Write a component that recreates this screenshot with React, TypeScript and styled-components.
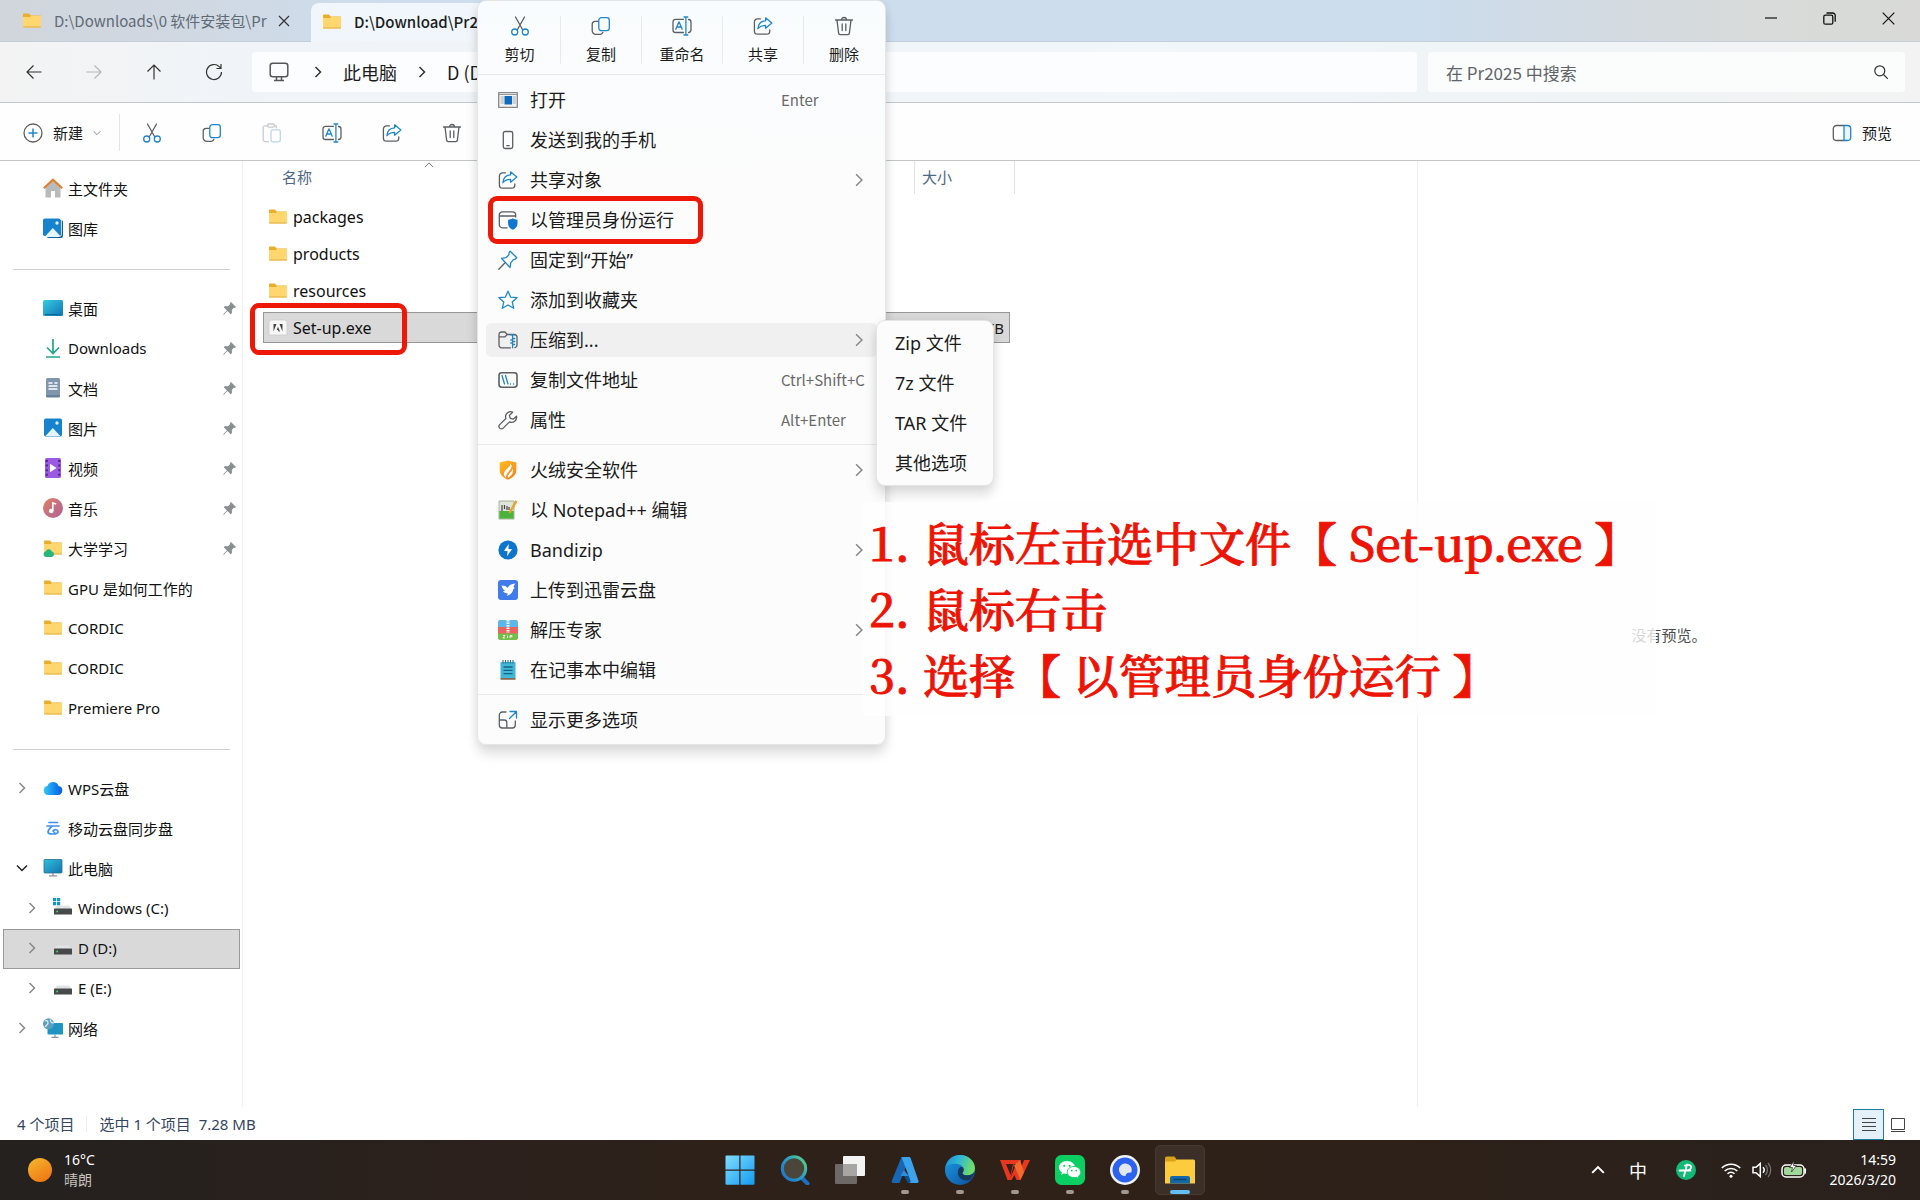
import React from "react";
import styled, { createGlobalStyle, css } from "styled-components";

const uiFont = `"Noto Sans", "Noto Sans CJK SC", sans-serif`;
const tightFont = `"Noto Sans CJK SC", sans-serif`;

const GlobalStyle = createGlobalStyle`
  *, *::before, *::after { box-sizing: border-box; }
  body { margin: 0; font-family: ${uiFont}; font-size: 15px; color: #1b1b1b; background: #fff; }
  button, input { font: inherit; color: inherit; }
  svg { display: block; flex: none; }
`;

/* ---------- shell ---------- */

const Screen = styled.div`
  position: relative;
  min-height: 100vh;
  display: flex;
  flex-direction: column;
  overflow: hidden;
`;

const PlainButton = styled.button`
  border: 0;
  padding: 0;
  background: none;
  display: flex;
  align-items: center;
  justify-content: center;
`;

const TitleBar = styled.header`
  height: 42px;
  display: flex;
  align-items: stretch;
  background: linear-gradient(90deg, #d1d6dc 0, #d0d8e2 10%, #cddded 20%, #ccdded 74%, #d3dae1 84%, #d8dbd9 92%, #d9dad8 100%);
  box-shadow: inset 0 -1px #c3ced8;
`;

const Tab = styled.div<{ $active?: boolean }>`
  display: flex;
  align-items: center;
  height: ${(p) => (p.$active ? 39 : 42)}px;
  width: ${(p) => (p.$active ? 300 : 311)}px;
  margin-top: ${(p) => (p.$active ? 3 : 0)}px;
  padding: ${(p) => (p.$active ? "0 12px 2px 11px" : "0 15px 0 22px")};
  font-family: ${tightFont};
  color: ${(p) => (p.$active ? "#1a1d21" : "#606a75")};
  font-weight: ${(p) => (p.$active ? 500 : 400)};
  background: ${(p) => (p.$active ? "#f0f6fb" : "transparent")};
  border-radius: 8px 8px 0 0;
`;

const TabLabel = styled.span`
  flex: 1;
  margin-left: 12px;
  line-height: 20px;
  white-space: nowrap;
  overflow: hidden;
`;

const TabClose = styled(PlainButton)`
  width: 24px;
  height: 24px;
`;

const WindowControls = styled.div`
  display: flex;
  margin: 0 2px 0 auto;
  height: 36px;
`;

const ControlButton = styled(PlainButton)`
  width: 59px;
  height: 36px;
`;

const NavBar = styled.div`
  height: 61px;
  padding: 10px 15px 10px 4px;
  display: flex;
  align-items: center;
  background: linear-gradient(90deg, #f3f3f3 0, #f0f4f8 12%, #f0f6fa 60%, #eff4f6 80%, #f3f3f3 100%);
  border-bottom: 1px solid #c2c8cd;
`;

const NavButton = styled(PlainButton)`
  width: 60px;
  height: 40px;
`;

const Address = styled.nav`
  flex: 1;
  height: 40px;
  margin-left: 8px;
  padding-left: 17px;
  display: flex;
  align-items: center;
  font-family: ${tightFont};
  font-size: 18px;
  line-height: 26px;
  background: #fbfdfe;
  border-radius: 4px;
`;

const Crumb = styled.a`
  color: inherit;
  text-decoration: none;
  margin: 0 15px;
`;

const CrumbArrow = styled.span<{ $first?: boolean }>`
  display: flex;
  width: 20px;
  justify-content: center;
  margin-left: ${(p) => (p.$first ? 19 : 0)}px;
`;

const SearchBox = styled.label`
  width: 477px;
  height: 40px;
  margin-left: 11px;
  padding: 0 16px 0 18px;
  display: flex;
  align-items: center;
  background: #fbfcfc;
  border-radius: 4px;
`;

const SearchInput = styled.input`
  flex: 1;
  border: 0;
  outline: 0;
  padding: 0;
  background: none;
  font-family: ${tightFont};
  font-size: 17px;
  &::placeholder { color: #616467; opacity: 1; }
`;

const Toolbar = styled.div`
  height: 58px;
  padding-top: 2px;
  display: flex;
  align-items: center;
  border-bottom: 1px solid #c2c6c8;
  background: #fefefe;
`;

const NewButton = styled(PlainButton)`
  gap: 10px;
  margin-left: 23px;
`;

const ToolDivider = styled.span`
  width: 1px;
  height: 37px;
  margin: 0 2px 0 18px;
  background: #e2e3e4;
`;

const ToolButton = styled(PlainButton)`
  width: 60px;
  height: 44px;
`;

const PreviewButton = styled(PlainButton)`
  gap: 10px;
  margin: 0 28px 0 auto;
`;

/* ---------- body ---------- */

const Body = styled.main`
  flex: 1;
  display: flex;
  align-items: stretch;
`;

const Sidebar = styled.nav`
  width: 243px;
  padding: 8px 0 0 3px;
  border-right: 1px solid #f0f0f0;
`;

const SideRule = styled.hr`
  height: 1px;
  border: 0;
  margin: 20px 12px 19px 10px;
  background: #d0d0d0;
`;

const SideItem = styled.a<{ $level?: number; $selected?: boolean }>`
  display: flex;
  align-items: center;
  height: 40px;
  width: 237px;
  padding: 0 3px 2px ${(p) => (p.$level ? 18 : 8)}px;
  color: #111;
  text-decoration: none;
  border: 1px solid ${(p) => (p.$selected ? "#999" : "transparent")};
  background: ${(p) => (p.$selected ? "#d9d9d9" : "transparent")};
`;

const Twisty = styled.span`
  width: 20px;
  display: flex;
  justify-content: center;
`;

const SideIcon = styled.span`
  width: 20px;
  margin: 0 5px 0 11px;
  display: flex;
  justify-content: center;
`;

const SideLabel = styled.span`
  flex: 1;
  white-space: nowrap;
`;

const Files = styled.section`
  flex: 1;
  padding-left: 20px;
`;

const FileTable = styled.table`
  table-layout: fixed;
  width: 752px;
  border-collapse: separate;
  border-spacing: 0;
`;

const Col = styled.col<{ $w: number }>`
  width: ${(p) => p.$w}px;
`;

const HeadCell = styled.th<{ $ruled?: boolean }>`
  position: relative;
  height: 37px;
  padding: 0 0 6px ${(p) => (p.$ruled ? 8 : 19)}px;
  text-align: left;
  font-weight: 400;
  color: #4d6785;
  ${(p) => p.$ruled && css`
    background:
      linear-gradient(#e2e2e2, #e2e2e2) 0 0 / 1px 33px no-repeat,
      linear-gradient(#e2e2e2, #e2e2e2) 100% 0 / 1px 33px no-repeat;
  `}
`;

const SortMark = styled.span`
  position: absolute;
  top: -1px;
  left: 161px;
`;

const FileCell = styled.td`
  height: 37px;
  padding: 0;
`;

const CellFill = styled.div<{ $selected?: boolean; $edge?: "start" | "end" }>`
  display: flex;
  align-items: center;
  height: 31px;
  padding: 0 5px 0 4px;
  border: 0 solid ${(p) => (p.$selected ? "#979797" : "transparent")};
  border-width: 1px ${(p) => (p.$edge === "end" ? 1 : 0)}px 1px ${(p) => (p.$edge === "start" ? 1 : 0)}px;
  background: ${(p) => (p.$selected ? "#d9d9d9" : "transparent")};
  ${(p) => p.$edge === "end" && css`
    justify-content: flex-end;
    margin-right: 5px;
  `}
`;

const FileName = styled.span`
  margin-left: 5px;
  font-size: 16px;
  color: #111;
`;

const NameWrap = styled.div`
  position: relative;
`;

const Highlight = styled.span<{ $inset: string }>`
  position: absolute;
  inset: ${(p) => p.$inset};
  border: 5px solid #ee1809;
  border-radius: 9px;
  pointer-events: none;
`;

const Preview = styled.aside`
  width: 503px;
  display: flex;
  align-items: center;
  justify-content: center;
  color: #4c4c4c;
  border-left: 1px solid #f0f0f0;
`;

const StatusBar = styled.footer`
  height: 33px;
  padding: 0 8px 0 17px;
  display: flex;
  align-items: center;
  color: #34455f;
  white-space: pre;
`;

const StatusDivider = styled.span`
  width: 1px;
  height: 16px;
  margin: 0 12px;
  background: #eceef0;
`;

const ViewButton = styled(PlainButton)<{ $on?: boolean }>`
  width: ${(p) => (p.$on ? 31 : 28)}px;
  height: 31px;
  margin-top: 2px;
  border: 1px solid ${(p) => (p.$on ? "#1f7c9c" : "transparent")};
  background: ${(p) => (p.$on ? "#e4f1fb" : "transparent")};
`;

const Spacer = styled.span`
  flex: 1;
`;

/* ---------- context menu ---------- */

const Popup = styled.div`
  position: absolute;
  background: linear-gradient(#f9fcfe, #fcfcfc 180px);
  border: 1px solid #e3e5e6;
  border-radius: 9px;
  box-shadow: 0 9px 12px rgba(0, 0, 0, 0.13), 0 0 8px rgba(0, 0, 0, 0.06);
`;

const ContextMenu = styled(Popup)`
  top: 0;
  left: 477px;
  width: 409px;
`;

const SubMenu = styled(Popup)`
  top: 320px;
  left: 876px;
  width: 118px;
  padding: 5px 0;
  display: flex;
  flex-direction: column;
  gap: 6px;
  background: #fcfcfc;
`;

const QuickRow = styled.div`
  height: 74px;
  padding: 4px 1px 0;
  display: grid;
  grid-template-columns: repeat(5, 1fr);
  align-items: center;
  border-bottom: 1px solid #e6eaec;
`;

const QuickButton = styled(PlainButton)`
  height: 48px;
  flex-direction: column;
  gap: 8px;
  line-height: 20px;
  & + & { border-left: 1px solid #e6eaec; }
`;

const MenuGroup = styled.div`
  display: flex;
  flex-direction: column;
  gap: 6px;
  padding: 8px 0 7px;
  & + & { border-top: 1px solid #e9e9e9; }
`;

const MenuItem = styled.button<{ $hot?: boolean; $plain?: boolean }>`
  position: relative;
  display: grid;
  grid-template-columns: ${(p) => (p.$plain ? "1fr" : "20px 239px 1fr 20px")};
  align-items: center;
  justify-items: start;
  column-gap: 12px;
  height: 34px;
  margin: 0 8px;
  padding: 0 8px 0 ${(p) => (p.$plain ? 10 : 12)}px;
  border: 0;
  border-radius: 5px;
  background: ${(p) => (p.$hot ? "#f0f0f0" : "transparent")};
  text-align: left;
  font-size: 18px;
  line-height: 26px;
  white-space: nowrap;
`;

const Shortcut = styled.span`
  font-family: ${tightFont};
  font-size: 15px;
  color: #6a6a6a;
`;

const ItemArrow = styled.span`
  grid-column: 4;
  justify-self: center;
`;

/* ---------- annotation ---------- */

const Notes = styled.ol`
  position: absolute;
  left: 863px;
  top: 502px;
  margin: 0;
  padding: 6px 16px 10px 6px;
  list-style: none;
  background: rgba(254, 254, 254, 0.78);
  font-family: "Noto Serif CJK SC", "Source Han Serif SC", "Liberation Serif", serif;
  font-size: 46px;
  font-weight: 500;
  -webkit-text-stroke: 1px #ee1405;
  line-height: 66px;
  color: #ee1405;
  white-space: pre;
`;

const NoteLine = styled.li`
  display: flex;
`;

const NoteNumber = styled.span`
  width: 54px;
`;

/* ---------- taskbar ---------- */

const Taskbar = styled.footer`
  height: 60px;
  display: grid;
  grid-template-columns: 1fr auto 1fr;
  align-items: center;
  color: #fff;
  background: linear-gradient(90deg, #24211f 0, #2c211c 25%, #2f2117 55%, #2a211d 100%);
`;

const Weather = styled.button`
  display: flex;
  align-items: center;
  gap: 12px;
  padding: 0 0 0 28px;
  border: 0;
  background: none;
  text-align: left;
  font-size: 14px;
  line-height: 20px;
`;

const Muted = styled.div`
  color: #c6c1bd;
`;

const Apps = styled.div`
  display: flex;
  gap: 5px;
`;

const AppButton = styled(PlainButton)<{ $running?: boolean; $active?: boolean }>`
  position: relative;
  width: 50px;
  height: 50px;
  border-radius: 5px;
  background: ${(p) => (p.$active ? "#3b2f27" : "transparent")};
  border: 1px solid ${(p) => (p.$active ? "#463a32" : "transparent")};
  ${(p) => (p.$running || p.$active) && css`
    &::after {
      content: "";
      position: absolute;
      bottom: 0;
      width: ${p.$active ? 20 : 8}px;
      height: 4px;
      border-radius: 2px;
      background: ${p.$active ? "#62bdf0" : "#a09891"};
    }
  `}
`;

const Tray = styled.div`
  display: flex;
  align-items: center;
  justify-content: flex-end;
  padding-right: 24px;
`;

const TrayButton = styled(PlainButton)<{ $w: number }>`
  width: ${(p) => p.$w}px;
  height: 40px;
  font-size: 18px;
`;

const Clock = styled.time`
  width: 84px;
  text-align: right;
  font-size: 14px;
  line-height: 20px;
`;

/* ---------- line icons ---------- */

const G = "#5c5f62";
const B = "#1f86cc";

type IconProps = { size?: number; children: React.ReactNode; box?: string };
const Line = ({ size = 20, box = "0 0 20 20", children }: IconProps) => (
  <svg width={size} height={size} viewBox={box} fill="none" stroke={G} strokeWidth="1.3" strokeLinecap="round" strokeLinejoin="round">
    {children}
  </svg>
);

const CutIcon = () => (
  <Line><path d="M5.5 1 12.8 14M14.5 1 7.2 14" /><g stroke={B}><circle cx="4.7" cy="16" r="3" /><circle cx="15.3" cy="16" r="3" /></g></Line>
);
const CopyIcon = () => (
  <Line><path d="M7 5.3H4.2a3 3 0 0 0-3 3v6.500a3.500 3.500 0 0 0 3.500 3.500h4.500a3 3 0 0 0 2.700-2" /><rect x="7.800" y="1.700" width="10.500" height="13" rx="2.600" stroke={B} /></Line>
);
const PasteIcon = () => (
  <Line><g stroke="#c9ccd0"><path d="M6 2.800H3a1.800 1.800 0 0 0-1.800 1.800v12.200A1.800 1.800 0 0 0 3 18.600h3.500M12.500 2.800h1.800v2" /><rect x="5.500" y="1" width="7" height="3.200" rx="1.400" /></g><rect x="9" y="6.800" width="9.300" height="12" rx="1.800" stroke="#bdd5e6" /></Line>
);
const RenameIcon = () => (
  <Line><path d="M11.500 3.300H3.600A2.600 2.600 0 0 0 1 5.900v8a2.600 2.600 0 0 0 2.600 2.600h7.900M16.500 3.500A2.600 2.600 0 0 1 19 6v8a2.600 2.600 0 0 1-2.500 2.500" /><g stroke={B}><path d="M13.900 1v18M12 1h3.800M12 19h3.800M3.800 13.200 7 5.800l3.200 7.400M5 11h4" /></g></Line>
);
const ShareIcon = () => (
  <Line><path d="M7.500 2.800H4.600A3.200 3.200 0 0 0 1.400 6v9a3.200 3.200 0 0 0 3.200 3.200h9a3.200 3.200 0 0 0 3.200-3.200v-1" /><path stroke={B} d="M12.600 1.800 18.800 7l-6.200 5.200V9.300c-4 0-6 1.200-7.700 3.400.3-4.400 3-7.600 7.700-7.900z" /></Line>
);
const TrashIcon = () => (
  <Line><path d="M1.500 4h17M3 4l1.600 13.200a1.600 1.600 0 0 0 1.600 1.400h7.600a1.600 1.600 0 0 0 1.600-1.400L17 4M7.500 4a2.500 2.500 0 0 1 5 0M8.200 8v6.500M11.800 8v6.500" /></Line>
);
const OpenIcon = () => (
  <Line><rect x=".7" y="2.700" width="18.600" height="14.600" fill="#f4f4f4" stroke="#888" /><path d="M1 4.500h18" stroke="#999" strokeWidth="1" /><path d="M3 7h2.500M3 9h2.500M3 11h2.500M3 13h2.500M15 7h2.500M15 9h2.500M15 11h2.500M15 13h2.500" stroke="#999" strokeWidth=".8" /><rect x="6.500" y="6" width="7.500" height="8.500" fill="#0f6cbd" stroke="none" /></Line>
);
const PhoneIcon = () => <Line><rect x="5.300" y="1.500" width="9.400" height="17" rx="1.800" /><path d="M8.800 15.700h2.400" /></Line>;
const AdminIcon = () => (
  <Line><path d="M9 17.800H4.500A3.200 3.200 0 0 1 1.300 14.600V5a3.200 3.200 0 0 1 3.200-3.200h10A3.200 3.200 0 0 1 17.700 5v2M1.500 6h16" /><path d="M14.800 8.300c1.500 1 3 1.400 4.700 1.500v3.700c0 3-1.800 5-4.700 6.200-2.900-1.200-4.700-3.200-4.700-6.200V9.800c1.700-.1 3.200-.5 4.700-1.500z" fill="#0f78d0" stroke="none" /></Line>
);
const PinLineIcon = () => <Line><path d="M.8 19.200 6.800 13" /><path stroke={B} d="M12.200 1.200 18.800 7.800l-1.600 1.300-2 .7-2.500 3-.6 4.700L3.400 8.300l4.500-.6 2.900-2.700.4-2.600z" /></Line>;
const StarIcon = () => <Line><path stroke={B} d="m10 1.200 2.600 5.900 6.500.6-4.900 4.200 1.500 6.400L10 15l-5.700 3.300 1.500-6.400L.9 7.700l6.500-.6z" /></Line>;
const ZipIcon = () => (
  <Line><path d="M12.500 17.800H3.600A2.600 2.600 0 0 1 1 15.200V4.400a2.400 2.400 0 0 1 2.400-2.400h3.500l2.300 2.500h7.200A2.600 2.600 0 0 1 19 7.100v8.100a2.600 2.600 0 0 1-2 2.500M1 6.800h6l2.200-2.200" /><path stroke={B} d="M12.800 4.800h3.600M14.600 4.800v13M14.600 8.500h2M14.600 11.500h2M12.800 10h1.600M12.800 13h1.600M14.600 14.500h2" /></Line>
);
const PathIcon = () => <Line><rect x="1" y="2.800" width="18" height="14.400" rx="2.600" strokeWidth="1.600" /><path stroke={B} d="m4 5.500 2.500 8.500M7.500 5.500 10 14M12.500 14h.1M15.500 14h.1" /></Line>;
const WrenchIcon = () => <Line><path d="M12.600 1.700a5 5 0 0 0-4.700 6.800L1.700 14.600a2.200 2.200 0 0 0 3.500 3.500l6.300-6.200a5.100 5.100 0 0 0 7-5.700l-3.300 3-2.900-.8-.9-3 3.200-3.200a5 5 0 0 0-2-.5z" /></Line>;
const MoreIcon = () => (
  <Line><path d="M8 2H4.300A3 3 0 0 0 1.300 5v10a3 3 0 0 0 3 3h10a3 3 0 0 0 3-3v-4M1.300 10h5a2.500 2.500 0 0 1 2.500 2.500V18" /><path stroke={B} d="M12 1.500h6.500V8M18.300 1.700 11.500 8.500" /></Line>
);
const Chevron = ({ dir = "right", size = 12, color = "#777", w = 1.5 }: { dir?: "right" | "down" | "up"; size?: number; color?: string; w?: number }) => (
  <svg width={size} height={size} viewBox="0 0 12 12" fill="none" stroke={color} strokeWidth={w}>
    <path d={dir === "right" ? "M3.500 1 8.500 6l-5 5" : dir === "down" ? "M1 3.500l5 5 5-5" : "M1 8.500l5-5 5 5"} />
  </svg>
);

/* ---------- colour icons ---------- */

const Folder = ({ cloud }: { cloud?: boolean }) => (
  <svg width="20" height="18" viewBox="0 0 20 18">
    <path d="M1 2.500C1 1.900 1.400 1.500 2 1.500h5l1.600 2H18c.6 0 1 .4 1 1V8H1z" fill="#e8ae2c" />
    <path d="M1 5h7l1.500-1.300H18c.6 0 1 .4 1 1v9.800c0 .5-.4 1-1 1H2c-.6 0-1-.4-1-1z" fill="#ffd76e" />
    <path d="M1 14.400c0 .6.400 1.100 1 1.100h16c.6 0 1-.5 1-1.100z" fill="#e2ae44" />
    {cloud && <path d="M3 18a2.800 2.800 0 0 1-.3-5.500 3.300 3.300 0 0 1 6.200 0A2.800 2.800 0 0 1 8.500 18z" fill="#27b77c" />}
  </svg>
);
const HomeIcon = () => (
  <svg width="20" height="20" viewBox="0 0 20 20">
    <path d="M2.500 9 10 2.500 17.500 9v10.500H12V13H8v6.500H2.500z" fill="#b9babd" />
    <path d="M.8 10.300 10 1.800l9.200 8.500" fill="none" stroke="#e07f2d" strokeWidth="2.200" />
  </svg>
);
const Picture = ({ stacked }: { stacked?: boolean }) => (
  <svg width="20" height="20" viewBox="0 0 20 20">
    {stacked && <rect x="3.500" y="2" width="16.500" height="18" rx="2" fill="#0d5f9e" />}
    {stacked && <path d="M18.300 1.500v15a2 2 0 0 1-2 2H2" stroke="#e9f5fc" fill="none" />}
    <rect x={stacked ? 0 : 1} y="0.500" width={stacked ? 17.500 : 18} height={stacked ? 17.500 : 18} rx="1.800" fill="#1683cc" />
    <path d="m2.500 18 7.300-8 7.500 8z" fill="#e6f5fd" />
    <circle cx="14" cy="5" r="1.700" fill="#d8f0fc" />
  </svg>
);
const DesktopIcon = () => (
  <svg width="20" height="16" viewBox="0 0 20 16">
    <defs><linearGradient id="desk" x2="1" y2="1"><stop stopColor="#38cbe0" /><stop offset="1" stopColor="#0c75b8" /></linearGradient></defs>
    <rect width="20" height="16" rx="1.500" fill="url(#desk)" /><path d="M2 14.600h16" stroke="#0f5f94" strokeDasharray="13 1 1 1" />
  </svg>
);
const DownloadIcon = () => (
  <svg width="18" height="20" viewBox="0 0 18 20" fill="none" stroke="#22a68b" strokeWidth="1.700"><path d="M9 1v14M3 9.500l6 6 6-6M2 19h14" /></svg>
);
const DocIcon = () => (
  <svg width="16" height="20" viewBox="0 0 16 20"><rect x="1" width="14" height="19" rx="1.500" fill="#8195ad" /><path d="M3.500 5h4M3.500 8h9M3.500 11h9M9.500 5h3" stroke="#fff" strokeWidth="1.400" /><path d="M1 17h14v1a1.500 1.500 0 0 1-1.500 1.500h-11A1.500 1.500 0 0 1 1 18z" fill="#6a7f99" /></svg>
);
const VideoIcon = () => (
  <svg width="18" height="20" viewBox="0 0 18 20"><rect x="1" width="16" height="20" rx="1.600" fill="#9a5be0" /><path d="M2.800 2v16M15.200 2v16" stroke="#4a2192" strokeWidth="2" strokeDasharray="2 2.600" /><path d="m6 5.800 6.500 4.200L6 14.200z" fill="#fff" /></svg>
);
const MusicIcon = () => (
  <svg width="20" height="20" viewBox="0 0 20 20"><defs><linearGradient id="mus" y2="1"><stop stopColor="#e08060" /><stop offset="1" stopColor="#b0609a" /></linearGradient></defs><circle cx="10" cy="10" r="10" fill="url(#mus)" /><circle cx="8.200" cy="13" r="2.300" fill="#fff" /><path d="M9.800 13V5l3.400 1" stroke="#fff" strokeWidth="1.600" fill="none" /></svg>
);
const CloudIcon = () => (
  <svg width="20" height="16" viewBox="0 0 20 16"><defs><linearGradient id="cl"><stop stopColor="#37c9f4" /><stop offset=".6" stopColor="#1384ee" /><stop offset="1" stopColor="#0a5ce0" /></linearGradient></defs><path d="M5 15a4.600 4.600 0 0 1-.6-9.100 6 6 0 0 1 11.200 0A4.600 4.600 0 0 1 15 15z" fill="url(#cl)" /></svg>
);
const YunIcon = () => (
  <svg width="14" height="14" viewBox="0 0 14 14" fill="none" stroke="#3d8ff0" strokeWidth="1.700" strokeLinecap="round"><path d="M3 1.500h8.500M1 5h12M5.500 5.500C3.500 8 2 9 2 11s2 2 4.500 2 5.500 0 5.500-2.300-3.500-2.700-5-.7L8.500 11.500" /></svg>
);
const PcIcon = () => (
  <svg width="20" height="18" viewBox="0 0 20 18"><defs><linearGradient id="pc" x2="1" y2="1"><stop stopColor="#30bfdd" /><stop offset="1" stopColor="#1473ad" /></linearGradient></defs><rect x="1" y=".5" width="18" height="13.500" rx=".8" fill="url(#pc)" stroke="#256f93" strokeWidth=".8" /><path d="M10 14v2.500M6 16.800h8" stroke="#8b9297" strokeWidth="1.300" /></svg>
);
const DriveIcon = ({ win }: { win?: boolean }) => (
  <svg width="20" height="20" viewBox="0 0 20 20"><path d="M4 7.500h12l3 4H1z" fill="#e2e3e4" /><rect x="1" y="10.500" width="18" height="6" rx=".6" fill="#47494b" /><circle cx="4.200" cy="13.500" r=".9" fill="#49e05b" />{win && <path d="M0 0h3.200v3.200H0zM4 0h3.200v3.200H4zM0 4h3.200v3.200H0zM4 4h3.200v3.200H4z" fill="#1494c8" />}</svg>
);
const NetIcon = () => (
  <svg width="20" height="20" viewBox="0 0 20 20"><rect x="4.500" y="5" width="15.500" height="11.500" rx=".8" fill="#1f93c2" /><path d="M12 16.500V19M8.500 19.300h7" stroke="#8b9297" strokeWidth="1.200" /><circle cx="5.500" cy="5.800" r="5.500" fill="#5c9fbd" /><path d="M2 3c2-1 3 0 3 2S3 7 2.500 9M7.500 1.500C7 4 9 5 10.500 5" stroke="#d8ecf4" strokeWidth="1.300" fill="none" /></svg>
);
const PushPin = () => (
  <svg width="13" height="13" viewBox="0 0 13 13" fill="#8a8e91"><path d="M8 0l5 5-1.200 1-1-.2-2 2.200.2 3-1.300 1.200L4.600 9 .8 12.800l-.6-.6L4 8.400.8 5.300 2 4l3 .2L7.200 2 7 1z" /></svg>
);
const AdobeFile = () => (
  <svg width="20" height="18" viewBox="0 0 20 18"><path d="M1 3 3 1h14l2 2v13H1z" fill="#f7f7f7" stroke="#cdcdcd" strokeWidth=".8" /><path d="M5.500 5h3L5.500 12.500zM11.500 5h3v7.500zM10 7.800l2 4.700h-1.400l-.6-1.500H8.700z" fill="#444" /></svg>
);
const HuorongIcon = () => <svg width="20" height="20" viewBox="0 0 20 20"><defs><linearGradient id="hr" x2=".7" y2="1"><stop stopColor="#ffbf1f" /><stop offset="1" stopColor="#f58420" /></linearGradient></defs><path d="M10 .5 18.300 2.500V10c0 4.500-3.300 7.700-8.300 9.700C5 17.700 1.700 14.500 1.700 10V2.500z" fill="url(#hr)" /><path d="M12.500 3.500c.2 3.500-5.500 5.500-6.500 9.500-.4 1.800.3 3.500 2 4.800C7.500 13 12.500 11 13.500 7c.2-1.300-.2-2.500-1-3.500z" fill="#fff" /><path d="M14.800 8.500c.8 4-.8 7-4.800 9.300-1-3.800 3.800-5 4.800-9.300z" fill="#fff" /></svg>;
const NppIcon = () => <svg width="20" height="20" viewBox="0 0 20 20"><path d="M1 1h15v18H1z" fill="#dfe5d8" stroke="#98a08f" strokeWidth=".8" /><path d="M1.400 11h14.200v7.600H1.400z" fill="#4cb23c" /><path d="M4 5v6M6.500 5v4M9 6v4M11 7v3" stroke="#444" strokeWidth="1.200" /><path d="m18.500.8-7 12" stroke="#e4a52c" strokeWidth="2.400" /></svg>;
const BandizipIcon = () => <svg width="20" height="20" viewBox="0 0 20 20"><circle cx="10" cy="10" r="9.600" fill="#0d76cc" /><path d="M10.800 4 6 10.800l3.600.4-.6 5L14 9.300l-3.600-.4z" fill="#fff" /></svg>;
const XunleiIcon = () => <svg width="20" height="20" viewBox="0 0 20 20"><rect width="20" height="20" rx="3" fill="#3f7bea" /><path d="M3.500 5.500c3 0 5 .8 6.300 2.500.8-2.500 3-4.200 7.700-4.500-1.200 1.200-1.800 2.300-1.800 4l1.300.6-1.600.9c-.8 3.800-3 5.800-6.700 7l1.200-2.500C7.500 13.300 5.800 12.500 5 11l2.200-.3C5 9.500 4 7.800 3.500 5.500z" fill="#fff" /></svg>;
const JieyaIcon = () => <svg width="20" height="20" viewBox="0 0 20 20"><rect width="20" height="20" rx="3" fill="#e9635f" /><path d="M0 7V3a3 3 0 0 1 3-3h14a3 3 0 0 1 3 3v4z" fill="#5ab9e8" /><path d="M0 13.500h20V17a3 3 0 0 1-3 3H3a3 3 0 0 1-3-3z" fill="#72c04a" /><path d="M10 0v13" stroke="#fff" strokeWidth="3" strokeDasharray="1.500 1" /><path d="M5 15.500h2l-2 2.500h2M9.500 15.500V18M12 15.500V18M12 15.500h2v1.300h-2" stroke="#fff" strokeWidth=".8" fill="none" /></svg>;
const NotepadIcon = () => <svg width="20" height="20" viewBox="-1 0 20 20"><rect x="1.500" y="2" width="15" height="17" rx="1.200" fill="#40b6d8" /><path d="M1.500 18h15v1.800h-15z" fill="#8a6b52" /><path d="M4 0v3.500M6.500 0v3.500M9 0v3.500M11.500 0v3.500M14 0v3.500" stroke="#2e6e86" strokeWidth="1.100" /><path d="M4.500 7h9M4.500 10.300h9M4.500 13.600h9" stroke="#14637f" strokeWidth="1.300" /></svg>;

const apps: { name: string; running?: boolean; active?: boolean; icon: React.ReactNode }[] = [
  { name: "开始", icon: <svg width="30" height="30" viewBox="0 0 30 30"><defs><linearGradient id="win" x2="1" y2="1"><stop stopColor="#7fdcff" /><stop offset="1" stopColor="#149cf0" /></linearGradient></defs><path d="M1.500.5h12.800v14H.5v-13a1 1 0 0 1 1-1zM15.500.5h13a1 1 0 0 1 1 1v13h-14zM.5 15.700h13.800v14H1.500a1 1 0 0 1-1-1zM15.500 15.700h14v13a1 1 0 0 1-1 1h-13z" fill="url(#win)" /></svg> },
  { name: "搜索", icon: <svg width="30" height="30" viewBox="0 0 30 30" fill="none"><defs><linearGradient id="se" x1="1" x2="0" y2=".8"><stop stopColor="#5ed67f" /><stop offset=".5" stopColor="#2b9fc4" /><stop offset="1" stopColor="#1e78d0" /></linearGradient></defs><path d="m21.500 22.500 6 6" stroke="#1d6fc0" strokeWidth="4" strokeLinecap="round" /><circle cx="14" cy="13.500" r="11.700" fill="#4b463c" stroke="url(#se)" strokeWidth="3" /></svg> },
  { name: "任务视图", icon: <svg width="32" height="30" viewBox="0 0 32 30"><rect x="9" y="1" width="22" height="20" rx="1" fill="#f3f3f3" /><rect x="1" y="9" width="22" height="20" rx="1" fill="#6d6966" /><path d="M9 9h14v12H9z" fill="#a8a6a4" /></svg> },
  { name: "Azure", running: true, icon: <svg width="28" height="28" viewBox="0 0 28 28"><path d="M10.500 1h8.300L8.500 27H2A1.500 1.500 0 0 1 .7 25z" fill="#1767b4" /><path d="M12 18h8v9h-3z" fill="#0c4f92" /><path d="M10.500 1H18c.8 0 1.300.4 1.600 1L27.500 25a1.500 1.500 0 0 1-1.400 2h-8c1.400-.3 1.800-1.200 1.400-2.200z" fill="#3ca2ec" /><path d="M13 14 9.500 20h8z" fill="#2d8fdc" /></svg> },
  { name: "Edge", running: true, icon: <svg width="30" height="30" viewBox="0 0 30 30"><defs><linearGradient id="ed" x2="1" y2=".3"><stop stopColor="#1c88d8" /><stop offset=".5" stopColor="#30b8d4" /><stop offset="1" stopColor="#6edc6a" /></linearGradient><linearGradient id="ed2" x2="1" y2="1"><stop stopColor="#1c9be4" /><stop offset="1" stopColor="#0c4f9e" /></linearGradient></defs><circle cx="15" cy="15" r="15" fill="url(#ed2)" /><path d="M.3 13C1.500 5 7.500 0 15 0c8.500 0 15 6 15 13.300 0 4.500-3.500 7-7.200 7-3.300 0-6-1-5.300-2.600 1.800-2 1.500-6-2-7.700C9.500 7.500 3 9 .3 13z" fill="url(#ed)" /><path d="M18.500 13.500c.5 1.500.2 3-.8 4.200-.8 1.500 1.800 2.700 5.100 2.600 3-.1 5-1.300 6.300-3-.6 3-2 5.500-4 7.500-4 1.500-8.500.3-10.700-2.600-2.300-3-1.800-8 .6-9.700 1.400-.8 3-.3 3.500 1z" fill="#17395c" /></svg> },
  { name: "WPS", running: true, icon: <svg width="30" height="22" viewBox="0 0 30 22"><path d="M0 1h21l-1.500 4H14l-3.800 14.500L15 8l3.500 8L24 1h6l-9.500 20h-4L14.500 16l-3 5h-4z" fill="#e8371f" /><path d="m6 5 4.500 11L13 5z" fill="#32201a" /><path d="M14 6.500 20.500 21 24 13l-4-12z" fill="#f26a2e" /></svg> },
  { name: "微信", running: true, icon: <svg width="30" height="30" viewBox="0 0 30 30"><rect width="30" height="30" rx="6.500" fill="#0bcf63" /><path d="M12 6c-4.500 0-8 2.900-8 6.500 0 2 1.100 3.800 2.900 5l-.7 2.300 2.700-1.400c1 .3 2 .4 3.100.4 4.500 0 8-2.800 8-6.300C20 8.900 16.500 6 12 6z" fill="#fff" /><path d="M19 11.500c-3.800 0-6.800 2.500-6.800 5.600s3 5.500 6.800 5.500c.9 0 1.700-.1 2.500-.3l2.300 1.200-.6-2c1.600-1 2.600-2.600 2.600-4.400 0-3.100-3-5.600-6.800-5.600z" fill="#fff" stroke="#0bcf63" strokeWidth=".9" /><g fill="#0bcf63"><circle cx="9.300" cy="10.800" r="1.100" /><circle cx="14.700" cy="10.800" r="1.100" /><circle cx="16.800" cy="15.600" r=".9" /><circle cx="21.200" cy="15.600" r=".9" /></g></svg> },
  { name: "夸克", running: true, icon: <svg width="30" height="30" viewBox="0 0 30 30"><circle cx="15" cy="15" r="15" fill="#f1f3f8" /><circle cx="15" cy="15" r="12.500" fill="#2b63ee" /><path d="M15 8.500a6.300 6.300 0 1 0 .5 12.600c.3-1.800 1-2.900 2.700-3.300 1.400-.3 2.500-.3 3-.3A6.400 6.400 0 0 0 15 8.500z" fill="#e4e7ee" /></svg> },
  { name: "文件资源管理器", active: true, icon: <svg width="30" height="28" viewBox="0 0 30 28"><path d="M0 2a1.500 1.500 0 0 1 1.500-1.500h8L12 4v3H0z" fill="#dba11a" /><path d="M0 5.500h10L12 3.500h16.500A1.500 1.500 0 0 1 30 5v22.500H0z" fill="#fccb3e" /><path d="M5 27.500V22a2 2 0 0 1 2-2h16a2 2 0 0 1 2 2v5.500z" fill="#1569a8" /><path d="M8.500 23.500h13" stroke="#0b4470" strokeWidth="1.600" /></svg> },
];

type Side = { label: string; icon: React.ReactNode; pin?: boolean; arrow?: "right" | "down"; level?: number; selected?: boolean };
const sections: Side[][] = [
  [{ label: "主文件夹", icon: <HomeIcon /> }, { label: "图库", icon: <Picture stacked /> }],
  [
    { label: "桌面", icon: <DesktopIcon />, pin: true },
    { label: "Downloads", icon: <DownloadIcon />, pin: true },
    { label: "文档", icon: <DocIcon />, pin: true },
    { label: "图片", icon: <Picture />, pin: true },
    { label: "视频", icon: <VideoIcon />, pin: true },
    { label: "音乐", icon: <MusicIcon />, pin: true },
    { label: "大学学习", icon: <Folder cloud />, pin: true },
    { label: "GPU 是如何工作的", icon: <Folder /> },
    { label: "CORDIC", icon: <Folder /> },
    { label: "CORDIC", icon: <Folder /> },
    { label: "Premiere Pro", icon: <Folder /> },
  ],
  [
    { label: "WPS云盘", icon: <CloudIcon />, arrow: "right" },
    { label: "移动云盘同步盘", icon: <YunIcon /> },
    { label: "此电脑", icon: <PcIcon />, arrow: "down" },
    { label: "Windows (C:)", icon: <DriveIcon win />, arrow: "right", level: 1 },
    { label: "D (D:)", icon: <DriveIcon />, arrow: "right", level: 1, selected: true },
    { label: "E (E:)", icon: <DriveIcon />, arrow: "right", level: 1 },
    { label: "网络", icon: <NetIcon />, arrow: "right" },
  ],
];

const files = [
  { name: "packages" },
  { name: "products" },
  { name: "resources" },
  { name: "Set-up.exe", size: "KB", selected: true },
];

type Item = { label: string; icon: React.ReactNode; keys?: string; more?: boolean; hot?: boolean; marked?: boolean };
const menu: Item[][] = [
  [
    { label: "打开", icon: <OpenIcon />, keys: "Enter" },
    { label: "发送到我的手机", icon: <PhoneIcon /> },
    { label: "共享对象", icon: <ShareIcon />, more: true },
    { label: "以管理员身份运行", icon: <AdminIcon />, marked: true },
    { label: "固定到“开始”", icon: <PinLineIcon /> },
    { label: "添加到收藏夹", icon: <StarIcon /> },
    { label: "压缩到...", icon: <ZipIcon />, more: true, hot: true },
    { label: "复制文件地址", icon: <PathIcon />, keys: "Ctrl+Shift+C" },
    { label: "属性", icon: <WrenchIcon />, keys: "Alt+Enter" },
  ],
  [
    { label: "火绒安全软件", icon: <HuorongIcon />, more: true },
    { label: "以 Notepad++ 编辑", icon: <NppIcon /> },
    { label: "Bandizip", icon: <BandizipIcon />, more: true },
    { label: "上传到迅雷云盘", icon: <XunleiIcon /> },
    { label: "解压专家", icon: <JieyaIcon />, more: true },
    { label: "在记事本中编辑", icon: <NotepadIcon /> },
  ],
  [{ label: "显示更多选项", icon: <MoreIcon /> }],
];

const quick = [
  { label: "剪切", icon: <CutIcon /> },
  { label: "复制", icon: <CopyIcon /> },
  { label: "重命名", icon: <RenameIcon /> },
  { label: "共享", icon: <ShareIcon /> },
  { label: "删除", icon: <TrashIcon /> },
];

const tools = [
  { label: "剪切", icon: <CutIcon /> },
  { label: "复制", icon: <CopyIcon /> },
  { label: "粘贴", icon: <PasteIcon /> },
  { label: "重命名", icon: <RenameIcon /> },
  { label: "共享", icon: <ShareIcon /> },
  { label: "删除", icon: <TrashIcon /> },
];

const navIcons = [
  { label: "后退", d: "M16.500 9H2M8.500 2.500 2 9l6.500 6.500", color: "#333" },
  { label: "前进", d: "M1.500 9H16M9.500 2.500 16 9l-6.500 6.500", color: "#b4b7ba" },
  { label: "向上", d: "M9 16.500V2M2.500 8.500 9 2l6.500 6.500", color: "#333" },
  { label: "刷新", d: "M16.500 9a7.500 7.500 0 1 1-2.300-5.400L16 5.300M16 1v4.500h-4.500", color: "#333" },
];

export default function App() {
  return (
    <Screen>
      <GlobalStyle />
      <TitleBar>
        <Tab>
          <Folder />
          <TabLabel>D:\Downloads\0 软件安装包\Pr</TabLabel>
          <TabClose aria-label="关闭标签页">
            <svg width="12" height="12" viewBox="0 0 12 12" stroke="#333" strokeWidth="1.200"><path d="m1 1 10 10M11 1 1 11" /></svg>
          </TabClose>
        </Tab>
        <Tab $active>
          <Folder />
          <TabLabel>D:\Download\Pr2025</TabLabel>
        </Tab>
        <WindowControls>
          <ControlButton aria-label="最小化"><svg width="12" height="12" viewBox="0 0 12 12" stroke="#111" strokeWidth="1.200"><path d="M0 6h12" /></svg></ControlButton>
          <ControlButton aria-label="还原"><svg width="13" height="13" viewBox="0 0 13 13" fill="none" stroke="#111" strokeWidth="1.300"><rect x=".8" y="3.200" width="9" height="9" rx="1.500" /><path d="M3.500 1h6.200A2.500 2.500 0 0 1 12.200 3.500v6.200" /></svg></ControlButton>
          <ControlButton aria-label="关闭"><svg width="13" height="13" viewBox="0 0 13 13" stroke="#111" strokeWidth="1.200"><path d="m.7.7 11.600 11.600M12.300.7.7 12.300" /></svg></ControlButton>
        </WindowControls>
      </TitleBar>

      <NavBar>
        {navIcons.map((n) => (
          <NavButton key={n.label} aria-label={n.label}>
            <svg width="18" height="18" viewBox="0 0 18 18" fill="none" stroke={n.color} strokeWidth="1.200"><path d={n.d} /></svg>
          </NavButton>
        ))}
        <Address aria-label="地址">
          <svg width="20" height="20" viewBox="0 0 20 20" fill="none" stroke="#55585b" strokeWidth="1.500"><rect x="1.200" y="1.200" width="17.600" height="13.600" rx="2.500" /><path d="M7.500 15v3M12.500 15v3M5 18.500h10" /></svg>
          <CrumbArrow $first><Chevron color="#333" /></CrumbArrow>
          <Crumb href="#pc">此电脑</Crumb>
          <CrumbArrow><Chevron color="#333" /></CrumbArrow>
          <Crumb href="#d">D (D:)</Crumb>
        </Address>
        <SearchBox>
          <SearchInput placeholder="在 Pr2025 中搜索" aria-label="搜索" />
          <svg width="16" height="16" viewBox="0 0 16 16" fill="none" stroke="#333" strokeWidth="1.200"><circle cx="6.800" cy="6.800" r="5" /><path d="m10.500 10.500 4.300 4.300" /></svg>
        </SearchBox>
      </NavBar>

      <Toolbar>
        <NewButton>
          <svg width="20" height="20" viewBox="0 0 20 20" fill="none" stroke={G} strokeWidth="1.300"><circle cx="10" cy="10" r="9" /><path stroke={B} strokeWidth="1.500" d="M10 5.500v9M5.500 10h9" /></svg>
          <span>新建</span>
          <Chevron dir="down" size={8} color="#8a8d90" />
        </NewButton>
        <ToolDivider />
        {tools.map((t) => <ToolButton key={t.label} aria-label={t.label}>{t.icon}</ToolButton>)}
        <PreviewButton>
          <Line><path d="M12 2.500H4.500A3.200 3.200 0 0 0 1.300 5.700v8.600a3.200 3.200 0 0 0 3.200 3.200H12" /><path stroke={B} fill="#eaf6fd" d="M12 2.500h3.500a3.200 3.200 0 0 1 3.200 3.200v8.600a3.200 3.200 0 0 1-3.200 3.200H12z" /></Line>
          <span>预览</span>
        </PreviewButton>
      </Toolbar>

      <Body>
        <Sidebar aria-label="导航窗格">
          {sections.map((group, g) => (
            <React.Fragment key={g}>
              {g > 0 && <SideRule />}
              {group.map((s, i) => (
                <SideItem key={i} href="#" $level={s.level} $selected={s.selected}>
                  <Twisty>{s.arrow && <Chevron dir={s.arrow} color={s.arrow === "down" ? "#222" : "#888"} />}</Twisty>
                  <SideIcon>{s.icon}</SideIcon>
                  <SideLabel>{s.label}</SideLabel>
                  {s.pin && <PushPin />}
                </SideItem>
              ))}
            </React.Fragment>
          ))}
        </Sidebar>

        <Files>
          <FileTable>
            <colgroup><Col $w={332} /><Col $w={319} /><Col $w={101} /></colgroup>
            <thead>
              <tr>
                <HeadCell>名称<SortMark><Chevron dir="up" size={10} w={1.2} /></SortMark></HeadCell>
                <HeadCell as="td" />
                <HeadCell $ruled>大小</HeadCell>
              </tr>
            </thead>
            <tbody>
              {files.map((f) => (
                <tr key={f.name}>
                  <FileCell>
                    <NameWrap>
                      <CellFill $selected={f.selected} $edge="start">
                        {f.selected ? <AdobeFile /> : <Folder />}
                        <FileName>{f.name}</FileName>
                      </CellFill>
                      {f.selected && <Highlight $inset="-9px 188px -12px -13px" />}
                    </NameWrap>
                  </FileCell>
                  <FileCell><CellFill $selected={f.selected} /></FileCell>
                  <FileCell><CellFill $selected={f.selected} $edge="end">{f.size}</CellFill></FileCell>
                </tr>
              ))}
            </tbody>
          </FileTable>
        </Files>

        <Preview>没有预览。</Preview>
      </Body>

      <StatusBar>
        <span>4 个项目</span>
        <StatusDivider />
        <span>选中 1 个项目  7.28 MB</span>
        <Spacer />
        <ViewButton $on aria-label="详细信息"><svg width="14" height="14" viewBox="0 0 14 14" stroke="#444" strokeWidth="1"><path d="M0 .5h14M0 4.500h14M0 8.500h14M0 12.500h14" /></svg></ViewButton>
        <ViewButton aria-label="大缩略图"><svg width="14" height="14" viewBox="0 0 14 14" fill="none" stroke="#444"><path d="M.5.500h13v11H.5zM0 13.500h14" /></svg></ViewButton>
      </StatusBar>

      <Taskbar>
        <Weather>
          <svg width="24" height="24" viewBox="0 0 24 24"><defs><linearGradient id="sun" x2=".6" y2="1"><stop stopColor="#f6b92e" /><stop offset="1" stopColor="#ef7a14" /></linearGradient></defs><circle cx="12" cy="12" r="12" fill="url(#sun)" /></svg>
          <div><div>16°C</div><Muted>晴朗</Muted></div>
        </Weather>
        <Apps>
          {apps.map((a) => (
            <AppButton key={a.name} aria-label={a.name} $running={a.running} $active={a.active}>{a.icon}</AppButton>
          ))}
        </Apps>
        <Tray>
          <TrayButton $w={40} aria-label="显示隐藏的图标"><Chevron dir="up" size={14} color="#fff" w={1.7} /></TrayButton>
          <TrayButton $w={40}>中</TrayButton>
          <TrayButton $w={56} aria-label="安全中心"><svg width="20" height="20" viewBox="0 0 20 20"><circle cx="10" cy="10" r="10" fill="#14b877" /><path d="M3.500 10.500h11M8 16l3-11.500M9 5.500c4-1.500 7 0 6 2.500s-4 2.500-6 2.500" stroke="#fff" strokeWidth="1.800" fill="none" strokeLinecap="round" /></svg></TrayButton>
          <TrayButton $w={34} aria-label="网络"><svg width="20" height="16" viewBox="0 0 20 16" fill="none" stroke="#fff" strokeWidth="1.600"><path d="M.8 6a13 13 0 0 1 18.400 0M3.700 9a9 9 0 0 1 12.600 0M6.500 11.800a5 5 0 0 1 7 0" /><circle cx="10" cy="14.300" r="1.500" fill="#fff" stroke="none" /></svg></TrayButton>
          <TrayButton $w={28} aria-label="音量"><svg width="20" height="18" viewBox="0 0 20 18" fill="none" stroke="#fff" strokeWidth="1.500"><path d="M1 6.300h3L8.300 2.500v13L4 11.700H1z" /><path d="M11 6.300a4 4 0 0 1 0 5.400" /><path d="M13.500 4a7.500 7.500 0 0 1 0 10M16 2a10.500 10.500 0 0 1 0 14" stroke="#777" strokeWidth="1.200" /></svg></TrayButton>
          <TrayButton $w={36} aria-label="电池"><svg width="26" height="18" viewBox="0 0 26 18"><rect x="1" y="4" width="22" height="12" rx="4" fill="none" stroke="#fff" strokeWidth="1.500" /><rect x="3" y="6" width="18" height="8" rx="2" fill="#9fd89a" /><path d="M24.200 8v4" stroke="#fff" strokeWidth="1.700" strokeLinecap="round" /><path d="M13 0 8.500 6.500h3L10.500 11l5-6.500h-3z" fill="#fff" stroke="#2a211d" strokeWidth=".7" /></svg></TrayButton>
          <Clock>14:59<br />2026/3/20</Clock>
        </Tray>
      </Taskbar>

      <ContextMenu role="menu">
        <QuickRow>
          {quick.map((q) => <QuickButton key={q.label} role="menuitem">{q.icon}<span>{q.label}</span></QuickButton>)}
        </QuickRow>
        {menu.map((group, g) => (
          <MenuGroup key={g} role="group">
            {group.map((m) => (
              <MenuItem key={m.label} role="menuitem" $hot={m.hot}>
                {m.icon}
                <span>{m.label}</span>
                {m.keys && <Shortcut>{m.keys}</Shortcut>}
                {m.more && <ItemArrow><Chevron size={14} color="#888" w={1.3} /></ItemArrow>}
                {m.marked && <Highlight $inset="-7px 174px -7px 2px" />}
              </MenuItem>
            ))}
          </MenuGroup>
        ))}
      </ContextMenu>

      <SubMenu role="menu">
        {["Zip 文件", "7z 文件", "TAR 文件", "其他选项"].map((t) => (
          <MenuItem key={t} role="menuitem" $plain>{t}</MenuItem>
        ))}
      </SubMenu>

      <Notes>
        <NoteLine><NoteNumber>1. </NoteNumber>鼠标左击选中文件【 Set-up.exe 】</NoteLine>
        <NoteLine><NoteNumber>2. </NoteNumber>鼠标右击</NoteLine>
        <NoteLine><NoteNumber>3. </NoteNumber>选择【 以管理员身份运行 】</NoteLine>
      </Notes>
    </Screen>
  );
}
